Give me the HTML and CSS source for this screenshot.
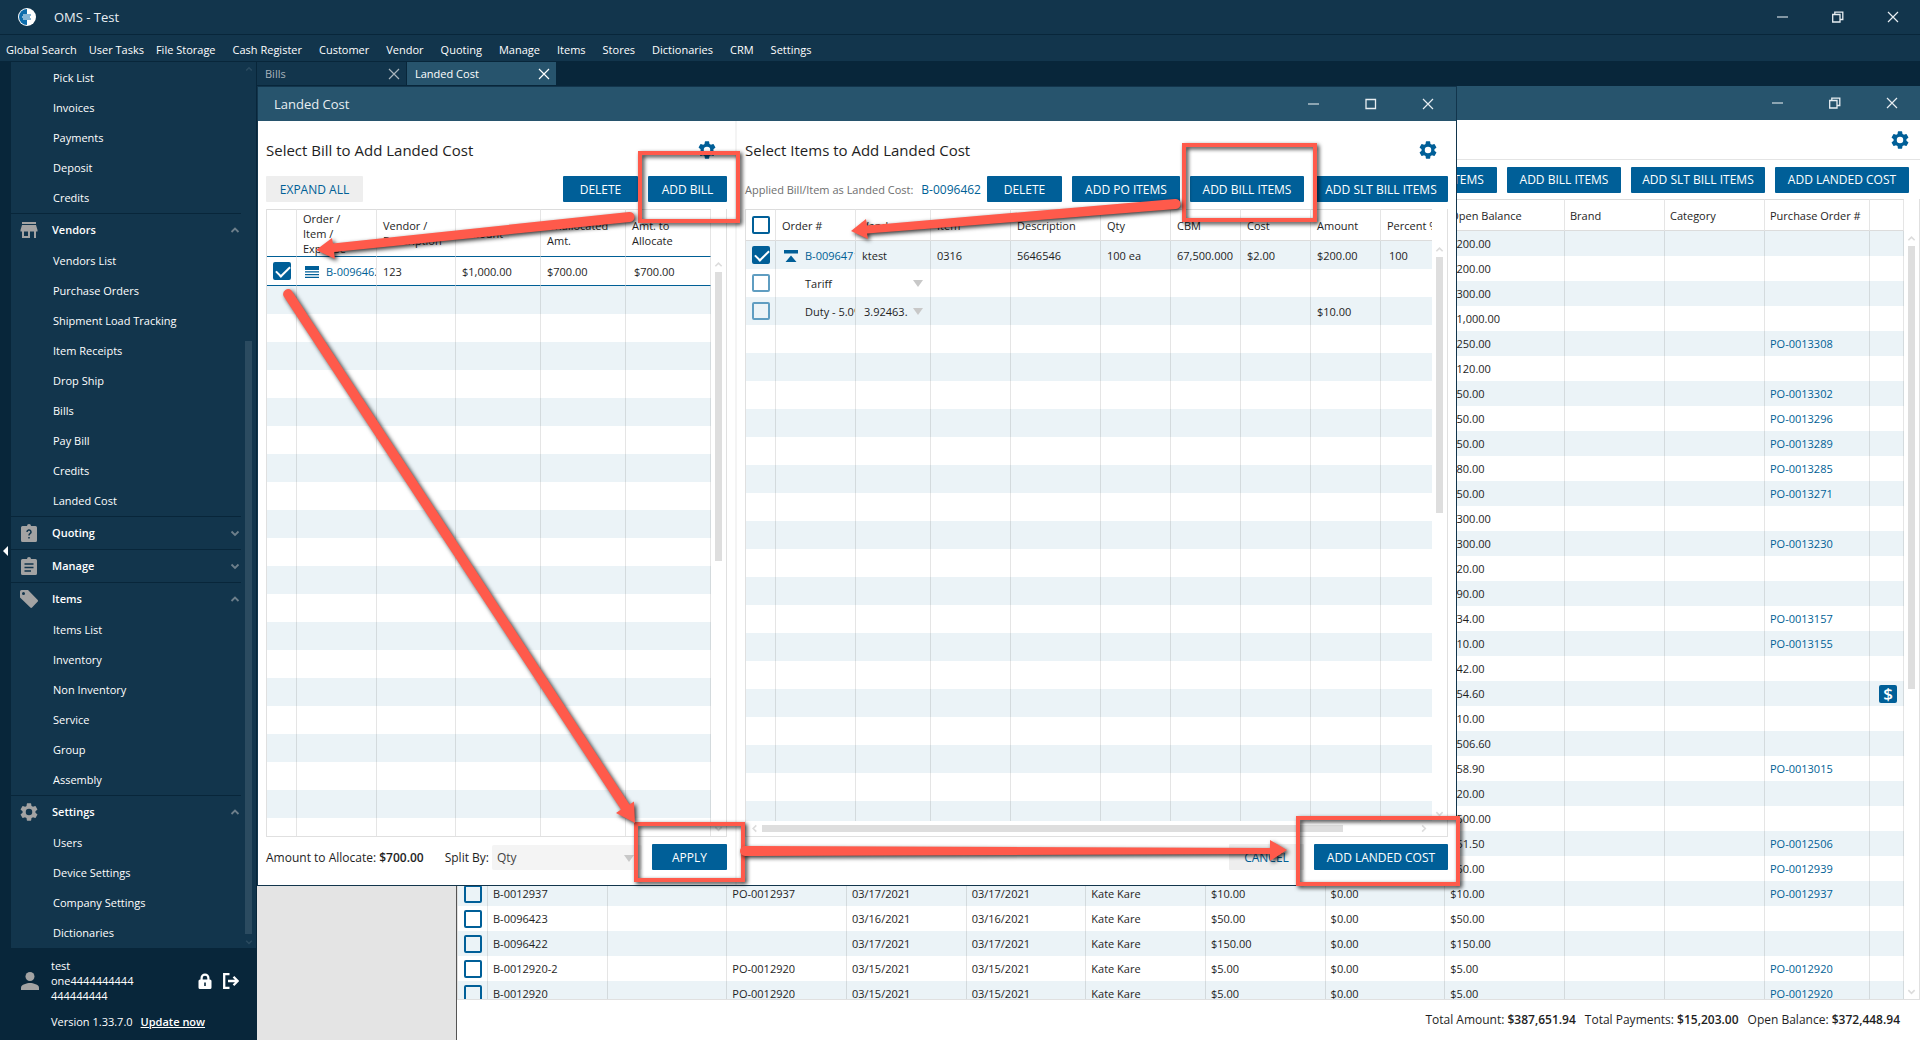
FILE: index.html
```html
<!DOCTYPE html>
<html lang="en">
<head>
<meta charset="utf-8">
<title>OMS - Test</title>
<link rel="stylesheet" href="styles.css">
</head>
<body>
<svg class="defs" aria-hidden="true">
  <symbol id="gear" viewBox="2 2 20 20"><path d="M19.14 12.94c.04-.3.06-.61.06-.94s-.02-.64-.07-.94l2.03-1.58a.49.49 0 0 0 .12-.61l-1.92-3.32a.49.49 0 0 0-.59-.22l-2.39.96a7 7 0 0 0-1.62-.94l-.36-2.54A.48.48 0 0 0 13.92 2.400h-3.840a.48.48 0 0 0-.47.41l-.36 2.540a7.200 7.200 0 0 0-1.620.940l-2.390-.960a.49.49 0 0 0-.59.220L2.740 8.870a.48.48 0 0 0 .12.610l2.030 1.580a6 6 0 0 0 0 1.880l-2.030 1.580a.49.49 0 0 0-.12.610l1.920 3.320c.12.220.37.290.59.220l2.390-.960c.5.380 1.030.700 1.620.940l.36 2.540c.05.240.24.410.48.410h3.840c.24 0 .44-.170.47-.410l.36-2.540a7 7 0 0 0 1.620-.940l2.390.960c.22.080.47 0 .59-.220l1.920-3.320a.48.48 0 0 0-.12-.610zM12 15.600a3.600 3.600 0 1 1 0-7.200 3.600 3.600 0 0 1 0 7.200z"/></symbol>
  <symbol id="min" viewBox="0 0 12 12"><path d="M0 6h11" fill="none" stroke="currentColor" stroke-width="1.500" opacity=".7"/></symbol>
  <symbol id="max" viewBox="0 0 12 12"><path d="M1 1.500h9.500v9h-9.500z" fill="none" stroke="currentColor" stroke-width="1.300"/></symbol>
  <symbol id="restore" viewBox="0 0 12 12"><path d="M.7 3.500h7.300v7.500H.7zM2.800 3.500V1.200h8v7.300H8" fill="none" stroke="currentColor" stroke-width="1.300"/></symbol>
  <symbol id="close" viewBox="0 0 12 12"><path d="M1 1l10 10M11 1L1 11" fill="none" stroke="currentColor" stroke-width="1.200"/></symbol>
  <symbol id="up" viewBox="0 0 10 10"><path d="M1.500 7L5 3.500 8.500 7" fill="none" stroke="currentColor" stroke-width="1.800"/></symbol>
  <symbol id="down" viewBox="0 0 10 10"><path d="M1.500 3.500L5 7l3.500-3.500" fill="none" stroke="currentColor" stroke-width="1.800"/></symbol>
</svg>

<header class="titlebar">
  <svg class="logo" viewBox="0 0 18 18"><circle cx="9" cy="9" r="9" fill="#fff"/><path d="M9 1a8 8 0 0 0 0 16z" fill="#0d6cab"/><path d="M5 7h4M4 9h5M5 11h4" stroke="#fff" stroke-width="1"/><path d="M9 7h4M9 9h3M9 11h4" stroke="#0d6cab" stroke-width="1"/></svg>
  <h1>OMS - Test</h1>
  <div class="controls"><button aria-label="Minimize"><svg><use href="#min"/></svg></button><button aria-label="Restore"><svg><use href="#restore"/></svg></button><button aria-label="Close"><svg><use href="#close"/></svg></button></div>
</header>
<nav class="menubar">
  <a href="#">Global Search</a><a href="#">User Tasks</a><a href="#">File Storage</a><a href="#">Cash Register</a><a href="#">Customer</a><a href="#">Vendor</a><a href="#">Quoting</a><a href="#">Manage</a><a href="#">Items</a><a href="#">Stores</a><a href="#">Dictionaries</a><a href="#">CRM</a><a href="#">Settings</a>
</nav>

<div class="shell">
  <aside class="sidebar">
    <button class="collapse" aria-label="Collapse sidebar"></button>
    <div class="side-main">
      <div class="side-panel">
        <nav class="side-list">
          <a href="#">Pick List</a><a href="#">Invoices</a><a href="#">Payments</a><a href="#">Deposit</a><a href="#">Credits</a>
          <button class="group"><svg viewBox="0 0 18 18"><path d="M2 1h14v2H2zM2 4h14l1.500 5v1.500H16V17h-2v-6.500h-4V17H2v-6.500H.5V9zM4 10.500V15h4v-4.500z" fill-rule="evenodd"/></svg>Vendors<svg class="chev"><use href="#up"/></svg></button>
          <a href="#">Vendors List</a><a href="#">Purchase Orders</a><a href="#">Shipment Load Tracking</a><a href="#">Item Receipts</a><a href="#">Drop Ship</a><a href="#">Bills</a><a href="#">Pay Bill</a><a href="#">Credits</a><a href="#">Landed Cost</a>
          <button class="group"><svg viewBox="0 0 18 18"><path d="M2.500 2H7a2 2 0 0 1 4 0h4.500A1.500 1.500 0 0 1 17 3.500v13a1.500 1.500 0 0 1-1.500 1.500h-13A1.500 1.500 0 0 1 1 16.500v-13A1.500 1.500 0 0 1 2.500 2z"/><path d="M7 8a2 2 0 1 1 3 1.700c-.8.500-1 .9-1 1.800M9 13v1.500" fill="none" stroke="#12354c" stroke-width="1.500"/></svg>Quoting<svg class="chev"><use href="#down"/></svg></button>
          <button class="group"><svg viewBox="0 0 18 18"><path d="M2.500 2H7a2 2 0 0 1 4 0h4.500A1.500 1.500 0 0 1 17 3.500v13a1.500 1.500 0 0 1-1.500 1.500h-13A1.500 1.500 0 0 1 1 16.500v-13A1.500 1.500 0 0 1 2.500 2z"/><path d="M4.500 7h9M4.500 10.500h9M4.500 14H11" fill="none" stroke="#12354c" stroke-width="1.600"/></svg>Manage<svg class="chev"><use href="#down"/></svg></button>
          <button class="group"><svg viewBox="0 0 18 18"><path d="M1.500 0H8l9.500 9.700a1.500 1.500 0 0 1 0 2.100l-5.200 5.500a1.500 1.500 0 0 1-2.200 0L0 7.500v-6A1.500 1.500 0 0 1 1.500 0zM3.500 2a1.500 1.500 0 1 0 0 3 1.500 1.500 0 0 0 0-3z" fill-rule="evenodd"/></svg>Items<svg class="chev"><use href="#up"/></svg></button>
          <a href="#">Items List</a><a href="#">Inventory</a><a href="#">Non Inventory</a><a href="#">Service</a><a href="#">Group</a><a href="#">Assembly</a>
          <button class="group"><svg><use href="#gear"/></svg>Settings<svg class="chev"><use href="#up"/></svg></button>
          <a href="#">Users</a><a href="#">Device Settings</a><a href="#">Company Settings</a><a href="#">Dictionaries</a>
        </nav>
        <div class="side-scroll"><svg><use href="#up"/></svg><i></i><svg><use href="#down"/></svg></div>
      </div>
      <div class="user">
        <div class="user-row">
          <svg class="person" viewBox="0 0 18 18"><circle cx="9" cy="4.500" r="4.500"/><path d="M0 18v-2.500C0 12.500 6 11 9 11s9 1.500 9 4.500V18z"/></svg>
          <p>test one4444444444 444444444</p>
          <button aria-label="Lock"><svg viewBox="0 0 16 16"><path d="M3.500 6.500V5a4.500 4.500 0 0 1 9 0v1.500h.5a1.500 1.500 0 0 1 1.500 1.500v6.500A1.500 1.500 0 0 1 13 16H3a1.500 1.500 0 0 1-1.500-1.500V8A1.500 1.500 0 0 1 3 6.500zm2.200 0h4.600V5a2.300 2.300 0 0 0-4.600 0zM7.200 9.500v3.500h1.600V9.500z" fill-rule="evenodd"/></svg></button>
          <button aria-label="Log out"><svg viewBox="0 0 16 16"><path d="M6.500 1.200H1.200v13.600h5.300M5 8h9M10.500 3.800L14.700 8l-4.200 4.200" fill="none" stroke="currentColor" stroke-width="2.300"/></svg></button>
        </div>
        <div class="version"><span>Version 1.33.7.0</span><a href="#">Update now</a></div>
      </div>
    </div>
  </aside>

  <main class="work">
    <div class="tabs">
      <button>Bills<svg><use href="#close"/></svg></button>
      <button class="active">Landed Cost<svg><use href="#close"/></svg></button>
    </div>
    <div class="desktop">

      <section class="window bills">
        <div class="win-title"><div class="controls"><button aria-label="Minimize"><svg><use href="#min"/></svg></button><button aria-label="Restore"><svg><use href="#restore"/></svg></button><button aria-label="Close"><svg><use href="#close"/></svg></button></div></div>
        <div class="bills-head"><button class="icon-btn" aria-label="Options"><svg><use href="#gear"/></svg></button></div>
        <div class="bills-body">
          <div class="toolbar">
            <button class="btn po">ADD PO ITEMS</button><button class="btn bi">ADD BILL ITEMS</button><button class="btn lg">ADD SLT BILL ITEMS</button><button class="btn lg">ADD LANDED COST</button>
          </div>
          <div class="grid">
            <div class="grid-view">
              <table>
                <colgroup><col class="c-check"><col span="9"><col class="c100" span="2"><col class="c105"><col class="c34"></colgroup>
                <thead><tr><th colspan="9"></th><th>Open Balance</th><th>Brand</th><th>Category</th><th>Purchase Order #</th><th></th></tr></thead>
                <tbody>
                  <tr><td colspan="9"></td><td>$200.00</td><td></td><td></td><td></td><td></td></tr>
                  <tr><td colspan="9"></td><td>$200.00</td><td></td><td></td><td></td><td></td></tr>
                  <tr><td colspan="9"></td><td>$300.00</td><td></td><td></td><td></td><td></td></tr>
                  <tr><td colspan="9"></td><td>$1,000.00</td><td></td><td></td><td></td><td></td></tr>
                  <tr><td colspan="9"></td><td>$250.00</td><td></td><td></td><td><a href="#">PO-0013308</a></td><td></td></tr>
                  <tr><td colspan="9"></td><td>$120.00</td><td></td><td></td><td></td><td></td></tr>
                  <tr><td colspan="9"></td><td>$50.00</td><td></td><td></td><td><a href="#">PO-0013302</a></td><td></td></tr>
                  <tr><td colspan="9"></td><td>$50.00</td><td></td><td></td><td><a href="#">PO-0013296</a></td><td></td></tr>
                  <tr><td colspan="9"></td><td>$50.00</td><td></td><td></td><td><a href="#">PO-0013289</a></td><td></td></tr>
                  <tr><td colspan="9"></td><td>$80.00</td><td></td><td></td><td><a href="#">PO-0013285</a></td><td></td></tr>
                  <tr><td colspan="9"></td><td>$50.00</td><td></td><td></td><td><a href="#">PO-0013271</a></td><td></td></tr>
                  <tr><td colspan="9"></td><td>$300.00</td><td></td><td></td><td></td><td></td></tr>
                  <tr><td colspan="9"></td><td>$300.00</td><td></td><td></td><td><a href="#">PO-0013230</a></td><td></td></tr>
                  <tr><td colspan="9"></td><td>$20.00</td><td></td><td></td><td></td><td></td></tr>
                  <tr><td colspan="9"></td><td>$90.00</td><td></td><td></td><td></td><td></td></tr>
                  <tr><td colspan="9"></td><td>$34.00</td><td></td><td></td><td><a href="#">PO-0013157</a></td><td></td></tr>
                  <tr><td colspan="9"></td><td>$10.00</td><td></td><td></td><td><a href="#">PO-0013155</a></td><td></td></tr>
                  <tr><td colspan="9"></td><td>$42.00</td><td></td><td></td><td></td><td></td></tr>
                  <tr><td colspan="9"></td><td>$54.60</td><td></td><td></td><td></td><td class="pay"><span>$</span></td></tr>
                  <tr><td colspan="9"></td><td>$10.00</td><td></td><td></td><td></td><td></td></tr>
                  <tr><td colspan="9"></td><td>$506.60</td><td></td><td></td><td></td><td></td></tr>
                  <tr><td colspan="9"></td><td>$58.90</td><td></td><td></td><td><a href="#">PO-0013015</a></td><td></td></tr>
                  <tr><td colspan="9"></td><td>$20.00</td><td></td><td></td><td></td><td></td></tr>
                  <tr><td colspan="9"></td><td>$500.00</td><td></td><td></td><td></td><td></td></tr>
                  <tr><td colspan="9"></td><td>$51.50</td><td></td><td></td><td><a href="#">PO-0012506</a></td><td></td></tr>
                  <tr><td colspan="9"></td><td>$50.00</td><td></td><td></td><td><a href="#">PO-0012939</a></td><td></td></tr>
                  <tr><td class="chk"><input type="checkbox" aria-label="B-0012937"></td><td>B-0012937</td><td></td><td>PO-0012937</td><td>03/17/2021</td><td>03/17/2021</td><td>Kate Kare</td><td>$10.00</td><td>$0.00</td><td>$10.00</td><td></td><td></td><td><a href="#">PO-0012937</a></td><td></td></tr>
                  <tr><td class="chk"><input type="checkbox" aria-label="B-0096423"></td><td>B-0096423</td><td></td><td></td><td>03/16/2021</td><td>03/16/2021</td><td>Kate Kare</td><td>$50.00</td><td>$0.00</td><td>$50.00</td><td></td><td></td><td></td><td></td></tr>
                  <tr><td class="chk"><input type="checkbox" aria-label="B-0096422"></td><td>B-0096422</td><td></td><td></td><td>03/17/2021</td><td>03/17/2021</td><td>Kate Kare</td><td>$150.00</td><td>$0.00</td><td>$150.00</td><td></td><td></td><td></td><td></td></tr>
                  <tr><td class="chk"><input type="checkbox" aria-label="B-0012920-2"></td><td>B-0012920-2</td><td></td><td>PO-0012920</td><td>03/15/2021</td><td>03/15/2021</td><td>Kate Kare</td><td>$5.00</td><td>$0.00</td><td>$5.00</td><td></td><td></td><td><a href="#">PO-0012920</a></td><td></td></tr>
                  <tr><td class="chk"><input type="checkbox" aria-label="B-0012920"></td><td>B-0012920</td><td></td><td>PO-0012920</td><td>03/15/2021</td><td>03/15/2021</td><td>Kate Kare</td><td>$5.00</td><td>$0.00</td><td>$5.00</td><td></td><td></td><td><a href="#">PO-0012920</a></td><td></td></tr>
                </tbody>
              </table>
            </div>
            <div class="vscroll"><svg><use href="#up"/></svg><i class="t-bills"></i><svg class="end"><use href="#down"/></svg></div>
          </div>
        </div>
        <footer class="totals"><span>Total Amount: <b>$387,651.94</b></span><span>Total Payments: <b>$15,203.00</b></span><span>Open Balance: <b>$372,448.94</b></span></footer>
      </section>

      <section class="window dialog">
        <div class="win-title"><h2>Landed Cost</h2><div class="controls"><button aria-label="Minimize"><svg><use href="#min"/></svg></button><button aria-label="Maximize"><svg><use href="#max"/></svg></button><button aria-label="Close"><svg><use href="#close"/></svg></button></div></div>
        <div class="panes">
          <div class="pane pane-bill">
            <div class="pane-head"><h3>Select Bill to Add Landed Cost</h3><button class="icon-btn" aria-label="Bill options"><svg><use href="#gear"/></svg></button></div>
            <div class="toolbar"><button class="btn light ex">EXPAND ALL</button><span class="grow"></span><button class="btn sm">DELETE</button><button class="btn ab">ADD BILL</button></div>
            <div class="grid">
              <div class="grid-view">
                <table class="bill-table">
                  <colgroup><col class="c30"><col class="c80"><col><col class="c85" span="3"></colgroup>
                  <thead><tr><th></th><th>Order /<br>Item /<br>Expense</th><th>Vendor /<br>Description</th><th>Amount</th><th>Unallocated Amt.</th><th>Amt. to<br>Allocate</th></tr></thead>
                  <tbody>
                    <tr class="selected"><td class="chk"><input type="checkbox" checked aria-label="B-0096462"></td><td><svg class="glyph" viewBox="0 0 14 12"><path d="M0 0h14v4H0zM0 5.300h14v1.200H0zM0 8h14v1.200H0zM0 10.800h14V12H0z"/></svg><a href="#">B-0096462</a></td><td>123</td><td>$1,000.00</td><td>$700.00</td><td class="edit">$700.00</td></tr>
                    <tr class="filler"><td></td><td></td><td></td><td></td><td></td><td></td></tr>
                  </tbody>
                </table>
              </div>
              <div class="vscroll"><svg><use href="#up"/></svg><i class="t-bill"></i><svg class="end"><use href="#down"/></svg></div>
            </div>
            <footer><span>Amount to Allocate: <b>$700.00</b></span><label for="split">Split By:</label><span class="drop"><select id="split"><option>Qty</option></select></span><button class="btn sm">APPLY</button></footer>
          </div>
          <div class="pane pane-items">
            <div class="pane-head"><h3>Select Items to Add Landed Cost</h3><button class="icon-btn" aria-label="Item options"><svg><use href="#gear"/></svg></button></div>
            <div class="toolbar"><span class="applied">Applied Bill/Item as Landed Cost:<a href="#">B-0096462</a></span><button class="btn sm">DELETE</button><button class="btn po">ADD PO ITEMS</button><button class="btn bi">ADD BILL ITEMS</button><button class="btn lg">ADD SLT BILL ITEMS</button></div>
            <div class="grid">
              <div class="grid-col">
                <div class="grid-view">
                  <table class="item-table">
                    <colgroup><col class="c30"><col class="c80"><col class="c75"><col class="c80"><col><col class="c70" span="4"><col class="c51"></colgroup>
                    <thead><tr><th class="chk"><input type="checkbox" aria-label="Select all"></th><th>Order #</th><th>Vendor</th><th>Item</th><th>Description</th><th>Qty</th><th>CBM</th><th>Cost</th><th>Amount</th><th>Percent %</th></tr></thead>
                    <tbody>
                      <tr><td class="chk"><input type="checkbox" checked aria-label="B-0096471"></td><td><svg class="glyph" viewBox="0 0 14 12"><path d="M0 0h14v3.500H0zM7 5.500L12.500 12h-11z"/></svg><a href="#">B-0096471</a></td><td>ktest</td><td>0316</td><td>5646546</td><td>100 ea</td><td>67,500.000</td><td>$2.00</td><td>$200.00</td><td class="edit">100</td></tr>
                      <tr><td class="chk"><input type="checkbox" class="dim" aria-label="Tariff"></td><td class="sub">Tariff</td><td class="pick"></td><td></td><td></td><td></td><td></td><td></td><td></td><td></td></tr>
                      <tr><td class="chk"><input type="checkbox" class="dim" aria-label="Duty"></td><td class="sub">Duty - 5.0%</td><td class="pick">3.92463.</td><td></td><td></td><td></td><td></td><td></td><td>$10.00</td><td></td></tr>
                      <tr class="filler"><td></td><td></td><td></td><td></td><td></td><td></td><td></td><td></td><td></td><td></td></tr>
                    </tbody>
                  </table>
                </div>
                <div class="hscroll"><svg><use href="#up"/></svg><i></i><svg><use href="#down"/></svg></div>
              </div>
              <div class="vscroll"><svg><use href="#up"/></svg><i class="t-items"></i><svg class="end low"><use href="#down"/></svg></div>
            </div>
            <footer><span class="grow"></span><button class="btn light sm">CANCEL</button><button class="btn lg">ADD LANDED COST</button></footer>
          </div>
        </div>
      </section>
    </div>
  </main>
</div>

<svg class="marks" viewBox="0 0 1920 1040" aria-hidden="true">
  <g fill="none" stroke="#ff5a4b" stroke-width="4">
    <path d="M640 153h98v68h-98z"/><path d="M1184 145h131v75h-131z"/><path d="M636 824h107v56H636z"/><path d="M1298 818h160v66h-160z"/>
  </g>
  <g fill="#ff5a4b">
    <path d="M316 250l16-12 1 5.500 296-31.500a5 5 0 0 1 1 10L334 252l1 7z"/>
    <path d="M851 231l15-12 1 6.500 308-26.500a5 5 0 0 1 1 10L867 233.500l1 5.500z"/>
    <path d="M635 823l-19-10 5-3.500L283.500 296a5 5 0 0 1 8-5.500L629.500 804.500l4.500-3z"/>
    <path d="M1287 850l-17 11v-7l-525 2a5 5 0 0 1 0-10l525 2v-8z"/>
  </g>
</svg>
</body>
</html>
```
FILE: styles.css
```css
* { box-sizing: border-box; }
body {
  margin: 0;
  height: 100vh;
  display: flex;
  flex-direction: column;
  overflow: hidden;
  position: relative;
  background: #08263a;
  color: #1e1e1e;
  font: 11px/15px "Open Sans", "Noto Sans", sans-serif;
}
button, select, input { font: inherit; }
button { border: 0; padding: 0; background: none; color: inherit; }
a { color: #005f96; text-decoration: none; }
h1, h2, h3, p { margin: 0; font-weight: 400; }
svg { fill: currentColor; flex: none; }
b { font-weight: 600; }
.defs { position: absolute; width: 0; height: 0; }
.grow { flex: 1; }

/* application frame */
.titlebar { display: flex; align-items: center; height: 35px; padding-left: 18px; background: #12354c; border-bottom: 1px solid #08263a; color: #e8eef2; }
.logo { width: 18px; height: 18px; }
.titlebar h1 { margin-left: 18px; font-size: 13px; }
.controls { display: flex; margin-left: auto; color: #e8eef2; }
.controls button { width: 55px; height: 34px; display: grid; place-items: center; }
.controls svg { width: 12px; height: 12px; }
.menubar { display: flex; align-items: center; gap: 17px; height: 26px; padding: 3px 0 0 6px; background: #12354c; }
.menubar a { color: #fff; white-space: nowrap; }
.menubar a:nth-child(-n+2) { margin-right: -5px; }
.shell { flex: 1; display: flex; min-height: 0; }

/* sidebar */
.sidebar { width: 257px; display: flex; color: #fff; }
.collapse { width: 11px; display: grid; place-items: center; }
.collapse::before { content: ""; border: 5px solid transparent; border-right-color: #fff; border-left: 0; }
.side-main { flex: 1; display: flex; flex-direction: column; padding-top: 1px; }
.side-panel { flex: 1; min-height: 0; display: flex; background: #12354c; border-right: 1px solid #08263a; }
.side-list { flex: 1; display: flex; flex-direction: column; padding-top: 1px; }
.side-list a { height: 30px; padding-left: 42px; line-height: 30px; color: #fff; }
.group { display: flex; align-items: center; height: 33px; padding: 0 1px 1px 9px; border-top: 1px solid #08263a; font-weight: 600; text-align: left; }
.group > svg:first-child { width: 18px; height: 18px; margin-right: 14px; color: #a3a3a3; }
.chev { width: 10px; height: 10px; margin-left: auto; color: #6d7f8b; }
.side-scroll { width: 15px; display: flex; flex-direction: column; align-items: center; padding: 3px 0 2px; color: #2b4b60; }
.side-scroll svg { width: 8px; height: 8px; }
.side-scroll i { width: 7px; height: 593px; margin: auto 0 4px; background: #2b4b60; }
.user { height: 92px; padding: 10px 18px 0 10px; }
.user-row { display: flex; align-items: center; gap: 10px; height: 45px; }
.person { width: 18px; height: 18px; margin-right: 2px; color: #a3a3a3; }
.user p { width: 86px; margin-right: auto; }
.user-row button svg { display: block; width: 16px; height: 16px; }
.version { display: flex; gap: 8px; padding: 11px 0 0 30px; }
.version a { color: #fff; font-weight: 600; text-decoration: underline; }

/* tab strip and window area */
.work { flex: 1; min-width: 0; display: flex; flex-direction: column; }
.tabs { display: flex; gap: 1px; height: 25px; padding: 1px 0; }
.tabs button { width: 149px; padding: 0 6px 0 8px; display: flex; align-items: center; justify-content: space-between; background: #12354c; color: #a9b4bc; }
.tabs svg { width: 12px; height: 12px; }
.tabs .active { background: #27546d; color: #fff; }
.desktop { flex: 1; position: relative; background: #e4e4e4; }
.window { position: absolute; top: 0; display: flex; flex-direction: column; background: #fff; }
.win-title { display: flex; align-items: center; height: 34px; background: #27546d; color: #e8eef2; }
.win-title h2 { padding-left: 16px; font-size: 13px; }
.win-title .controls button { width: 57px; }
.bills { left: 199px; right: 0; bottom: 0; border-left: 1px solid #555; }
.dialog { left: 0; width: 1200px; height: 800px; border: 1px solid #12354c; }

/* buttons */
.toolbar { display: flex; align-items: center; gap: 10px; }
.btn { flex: none; height: 26px; background: #005f98; color: #fff; border-radius: 1px; font-size: 12px; text-align: center; white-space: nowrap; }
.light { background: #eee; color: #005f96; }
.sm { width: 75px; }
.ab { width: 79px; }
.ex { width: 97px; }
.po { width: 108px; }
.bi { width: 114px; }
.lg { width: 134px; }
.icon-btn { color: #005f98; }
.icon-btn svg { display: block; width: 18px; height: 18px; }

/* data grids */
.grid { flex: 1; min-height: 0; display: flex; border: 1px solid #e0e0e0; border-top: 0; }
.grid-col { flex: 1; min-width: 0; display: flex; flex-direction: column; }
.grid-view { flex: 1; min-width: 0; min-height: 0; overflow: hidden; }
table { width: 100%; table-layout: fixed; border-spacing: 0; }
th, td { padding: 0 5px; border-right: 1px solid rgba(0, 0, 0, .1); overflow: hidden; white-space: nowrap; text-align: left; font-weight: 400; }
th { border-top: 1px solid #dcdcdc; border-bottom: 1px solid #dcdcdc; }
td { height: 25px; }
tbody tr:nth-child(odd) { background: #ebf3f7; }
.chk { padding: 0 6px; }
.c-check { width: 30px; } .c30 { width: 30px; } .c34 { width: 34px; } .c51 { width: 51px; }
.c70 { width: 70px; } .c75 { width: 75px; } .c80 { width: 80px; } .c85 { width: 85px; }
.c100 { width: 100px; } .c105 { width: 105px; }
input[type=checkbox] { appearance: none; display: block; width: 18px; height: 18px; margin: 0; border: 2px solid #005f98; border-radius: 2px; }
input[type=checkbox]:checked { background: #005f98; }
input[type=checkbox]:checked::before { content: ""; display: block; width: 12px; height: 6px; margin: 2px 0 0 1px; border: solid #fff; border-width: 0 0 2px 2px; transform: rotate(-45deg); }
input[type=checkbox].dim { border-color: #5f9dc1; }
.vscroll { width: 15px; display: flex; flex-direction: column; align-items: center; color: #dcdcdc; }
.vscroll svg, .hscroll svg { width: 9px; height: 9px; }
.vscroll i, .hscroll i { background: #dedede; }
.vscroll i { width: 7px; margin-top: 3px; }
.vscroll .end { margin: auto 0 3px; }
.vscroll .low { margin-bottom: 18px; }

/* bills window */
.bills-head { display: flex; justify-content: flex-end; align-items: center; height: 39px; padding-right: 11px; }
.bills-body { flex: 1; min-height: 0; display: flex; flex-direction: column; border-top: 1px solid #e4e4e4; }
.bills-body .toolbar { height: 39px; padding-right: 11px; justify-content: flex-end; }
.bills th { height: 32px; }
.bills .vscroll { padding-top: 35px; }
.t-bills { height: 443px; }
.bills .pay { padding: 0 9px; }
.pay span { display: block; width: 18px; height: 18px; border-radius: 2px; background: #005f98; color: #fff; font-size: 17px; font-weight: 600; line-height: 18px; text-align: center; }
.totals { display: flex; justify-content: flex-end; gap: 9px; height: 40px; padding: 12px 20px 0; font-size: 12px; }

/* landed cost dialog */
.panes { flex: 1; min-height: 0; display: flex; }
.pane { display: flex; flex-direction: column; padding: 0 8px 15px; }
.pane-bill { width: 479px; border-right: 2px solid #f4f4f4; }
.pane-items { flex: 1; min-width: 0; }
.pane-head { display: flex; align-items: center; justify-content: space-between; height: 55px; padding: 2px 11px 0 0; }
.pane-head h3 { font-size: 15px; line-height: 20px; }
.pane .grid { margin: 7px 0; }
.pane footer { display: flex; align-items: center; gap: 10px; height: 26px; white-space: nowrap; font-size: 12px; }
.pane td, .pane th { height: 28px; padding: 0 6px; }
.pane table { height: 100%; }
.pane .filler td { height: auto; background: repeating-linear-gradient(#fff 0 28px, #ebf3f7 28px 56px); }
.pane .bill-table .filler td { background: repeating-linear-gradient(#ebf3f7 0 28px, #fff 28px 56px); }
.bill-table thead th { height: 47px; white-space: normal; border-bottom: 0; }
.bill-table .selected td { height: 30px; background: #fff; border-top: 1px solid #005f96; border-bottom: 1px solid #005f96; }
.pane .item-table th { height: 32px; }
.item-table tr > :last-child { border-right: 0; }
.pane .edit { padding-left: 8px; }
.pane .sub { padding-left: 29px; }
.pane .pick { padding-left: 8px; position: relative; }
.pick::after { content: ""; position: absolute; right: 7px; top: 11px; border: 5px solid transparent; border-top: 7px solid #c8c8c8; border-bottom: 0; }
.glyph { width: 14px; height: 12px; margin: 0 7px 0 2px; vertical-align: -2px; color: #005f98; }
.pane-bill .vscroll { padding-top: 51px; }
.t-bill { height: 289px; }
.pane-items .vscroll { padding-top: 36px; }
.t-items { height: 256px; }
.hscroll { display: flex; align-items: center; height: 15px; padding: 0 4px; color: #dcdcdc; }
.hscroll svg { transform: rotate(-90deg); }
.hscroll i { width: 581px; height: 7px; margin: 0 auto 0 3px; }
.pane-items .toolbar { justify-content: flex-end; }
.applied { flex: 1; min-width: 0; margin-right: -10px; display: flex; align-items: center; gap: 8px; color: #6e6e6e; white-space: nowrap; }
.applied a { font-size: 12px; }
.drop { flex: 1; position: relative; }
.drop::after { content: ""; position: absolute; right: 8px; top: 10px; border: 5px solid transparent; border-top: 7px solid #c8c8c8; border-bottom: 0; }
.drop select { display: block; width: 100%; height: 25px; padding: 0 5px; border: 0; border-radius: 2px; background: #f4f4f4; color: #444; appearance: none; }
.pane footer label { margin: 0 -7px 0 11px; }

/* instructional arrows and frames laid over the screen */
.marks { position: absolute; top: 0; left: 0; width: 1920px; height: 1040px; pointer-events: none; }
.marks g { filter: drop-shadow(2px 2px 2px rgba(0, 0, 0, .8)); }
```
